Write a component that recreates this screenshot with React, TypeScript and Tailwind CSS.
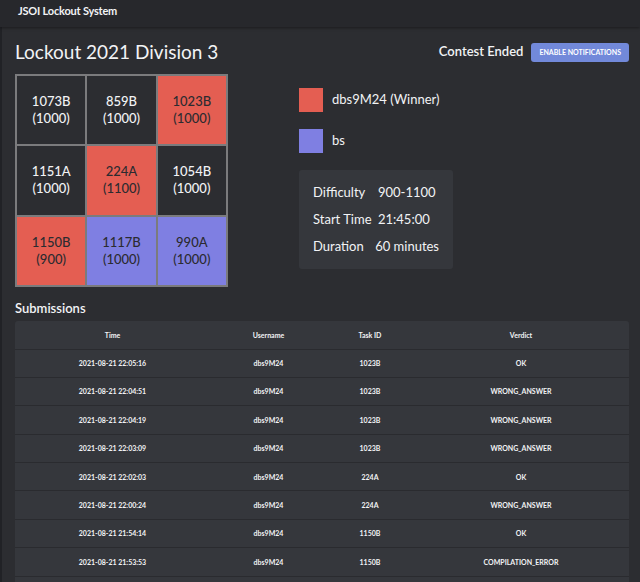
const grid = [
  { id: '1073B', pts: 1000, c: 'none' },
  { id: '859B', pts: 1000, c: 'none' },
  { id: '1023B', pts: 1000, c: 'red' },
  { id: '1151A', pts: 1000, c: 'none' },
  { id: '224A', pts: 1100, c: 'red' },
  { id: '1054B', pts: 1000, c: 'none' },
  { id: '1150B', pts: 900, c: 'red' },
  { id: '1117B', pts: 1000, c: 'blue' },
  { id: '990A', pts: 1000, c: 'blue' },
]

const subs = [
  ['2021-08-21 22:05:16', 'dbs9M24', '1023B', 'OK'],
  ['2021-08-21 22:04:51', 'dbs9M24', '1023B', 'WRONG_ANSWER'],
  ['2021-08-21 22:04:19', 'dbs9M24', '1023B', 'WRONG_ANSWER'],
  ['2021-08-21 22:03:09', 'dbs9M24', '1023B', 'WRONG_ANSWER'],
  ['2021-08-21 22:02:03', 'dbs9M24', '224A', 'OK'],
  ['2021-08-21 22:00:24', 'dbs9M24', '224A', 'WRONG_ANSWER'],
  ['2021-08-21 21:54:14', 'dbs9M24', '1150B', 'OK'],
  ['2021-08-21 21:53:53', 'dbs9M24', '1150B', 'COMPILATION_ERROR'],
]

export default function App() {
  return (
    <div className="flex h-[582px] w-[640px] flex-col overflow-hidden bg-[#2c2d31] text-[#f2f3f5] [font-family:Lato,sans-serif]">
      <header className="relative z-10 flex h-[27px] shrink-0 items-start bg-[#27282c] px-[18px] pt-[3px] shadow-[0_1px_3px_rgba(0,0,0,0.4)]">
        <span className="text-[11px] font-bold tracking-[-0.2px]">JSOI Lockout System</span>
      </header>

      <div className="flex flex-1 border-l-2 border-[#212226]">
        <main className="flex flex-1 flex-col px-[13px] pt-[12px]">
          <div className="flex items-center justify-between">
            <h1 className="text-[19px] leading-[26px]">Lockout 2021 Division 3</h1>
            <div className="flex items-center gap-[8px]">
              <span className="text-[13px] font-semibold">Contest Ended</span>
              <button className="h-[19px] rounded-[3px] bg-[#7289da] px-[8px] text-[7px] font-bold uppercase text-white">
                Enable Notifications
              </button>
            </div>
          </div>

          <div className="mt-[9px] flex">
            <div className="grid h-[213px] w-[213px] grid-cols-3 gap-[2px] border-2 border-[#7b7b7d] bg-[#7b7b7d]">
              {grid.map((g) => (
                <div
                  key={g.id}
                  className={
                    'flex flex-col items-center justify-center text-[13px] font-medium leading-[17px] ' +
                    (g.c === 'red'
                      ? 'bg-[#e45e52] text-[#2b2b30]'
                      : g.c === 'blue'
                        ? 'bg-[#7f7fe2] text-[#2b2b30]'
                        : 'bg-[#2c2d31] text-[#f2f3f5]')
                  }
                >
                  <span>{g.id}</span>
                  <span>({g.pts})</span>
                </div>
              ))}
            </div>

            <div className="ml-[71px] pt-[14px]">
              <div className="flex items-center gap-[9px]">
                <div className="h-[24px] w-[24px] bg-[#e45e52]" />
                <span className="text-[13px]">dbs9M24 (Winner)</span>
              </div>
              <div className="mt-[17px] flex items-center gap-[9px]">
                <div className="h-[24px] w-[24px] bg-[#7f7fe2]" />
                <span className="text-[13px]">bs</span>
              </div>
              <div className="mt-[17px] w-[154px] whitespace-nowrap rounded-[3px] bg-[#35373c] px-[14px] py-[9px] text-[13px] leading-[27px]">
                <div className="flex"><span className="w-[65px]">Difficulty</span><span>900-1100</span></div>
                <div className="flex"><span className="w-[65px]">Start Time</span><span>21:45:00</span></div>
                <div className="flex"><span className="w-[65px]">Duration</span><span>60 minutes</span></div>
              </div>
            </div>
          </div>

          <h2 className="mt-[12px] text-[13px] font-semibold leading-[18px]">Submissions</h2>
          <div className="mt-[4px] w-[614px] flex-1 rounded-t-[3px] bg-[#35373c]">
            <table className="w-full table-fixed border-collapse text-center text-[7px] font-bold">
              <colgroup>
                <col className="w-[195px]" />
                <col className="w-[117px]" />
                <col className="w-[86px]" />
                <col />
              </colgroup>
              <thead>
                <tr className="h-[28px] border-b border-[#2a2b2f]">
                  <th className="font-bold">Time</th>
                  <th className="font-bold">Username</th>
                  <th className="font-bold">Task ID</th>
                  <th className="font-bold">Verdict</th>
                </tr>
              </thead>
              <tbody>
                {subs.map((s, i) => (
                  <tr key={i} className="h-[28.4px] border-b border-[#2a2b2f]">
                    <td>{s[0]}</td>
                    <td>{s[1]}</td>
                    <td>{s[2]}</td>
                    <td>{s[3]}</td>
                  </tr>
                ))}
              </tbody>
            </table>
          </div>
        </main>
      </div>
    </div>
  )
}
